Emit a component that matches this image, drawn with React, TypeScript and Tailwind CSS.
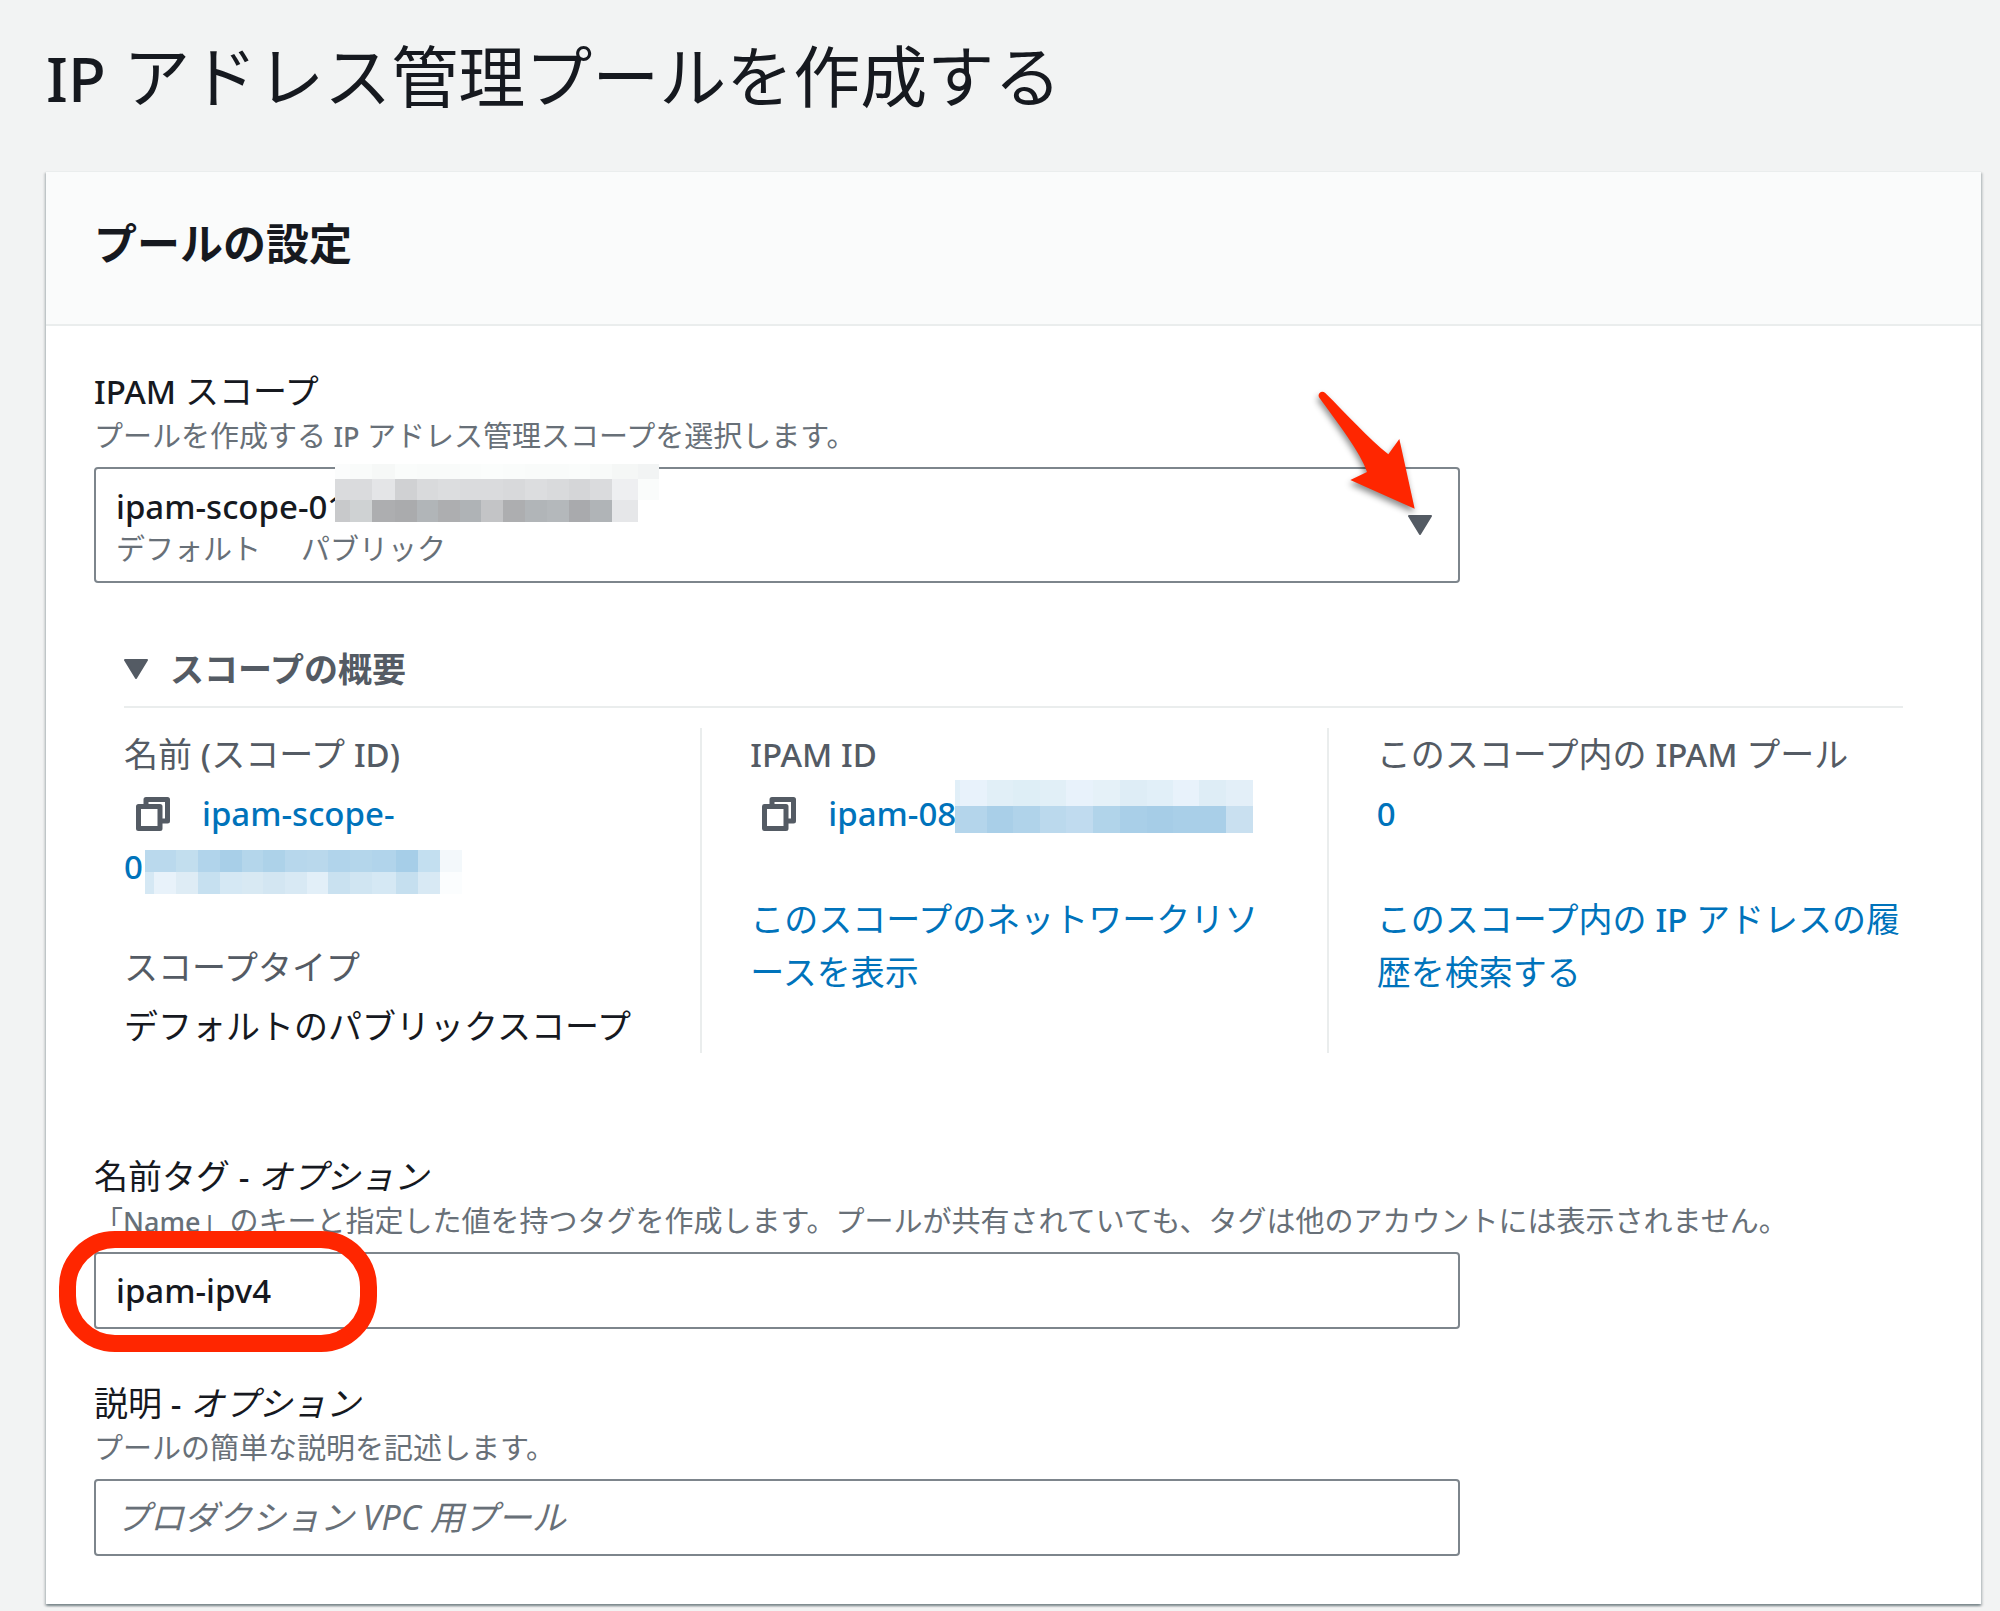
import React, { useState } from 'react';

interface MosaicProps {
  cols: number[];
  rows: number[];
  colors: string[][];
  className?: string;
}

interface FieldProps {
  id: string;
  label: React.ReactNode;
  optional?: boolean;
  hint: React.ReactNode;
  children: React.ReactNode;
}

// cols and rows are the edges of the cells, so they hold one value more than the colors
const scopeMask = {
  cols: [0, 15, 37, 60, 82, 103, 125, 146, 168, 190, 212, 234, 255, 277, 303, 324],
  rows: [0, 15, 36, 58],
  colors: [
    ['#fbfcfc', '#f9fbfa', '#f6f8f7', '#fafcfb', '#f9fbfa', '#f9fbfa', '#fafcfb', '#fbfdfc', '#fafcfb', '#f9fbfa', '#f9fbfa', '#fafcfb', '#f8faf9', '#f5f7f6', '#f2f4f4'],
    ['#dadbdd', '#dadbdd', '#e4e5e7', '#d0d1d3', '#d9dadc', '#dcdddf', '#dadbdd', '#dadbdd', '#d8d9db', '#dcdddf', '#d9dadc', '#d5d6d8', '#dadbdd', '#eeeff1', '#fafcfb'],
    ['#c8c9cb', '#cfd2d3', '#adaeb0', '#aaabad', '#b1b5b8', '#adaeb0', '#afb3b6', '#c3c4c6', '#adaeb0', '#b1b5b8', '#b4b8bb', '#a9aaad', '#b0b4b7', '#e6e7e9', '#ffffff'],
  ],
};

const scopeIdMask = {
  cols: [0, 9, 31, 53, 75, 97, 118, 140, 162, 183, 205, 227, 251, 273, 295, 317],
  rows: [0, 22, 44],
  colors: [
    ['#bad9ed', '#bad9ed', '#c2deee', '#b1d4eb', '#a8cfe8', '#b4d6eb', '#add2e9', '#b7d7ec', '#b9d8ec', '#b1d4eb', '#b4d6eb', '#b1d4eb', '#a6cee8', '#c3dff0', '#f3f8fb'],
    ['#d5e8f4', '#e8f2fa', '#deecf5', '#c6e0f0', '#d5e8f4', '#d8e9f3', '#d3e6f2', '#d8e9f4', '#e2eff8', '#c9e1f0', '#d0e5f2', '#d5e8f4', '#c5dfef', '#d8e9f4', '#fbfdfe'],
  ],
};

const ipamIdMask = {
  cols: [0, 5, 32, 58, 85, 111, 138, 165, 192, 218, 244, 271, 298],
  rows: [0, 26, 53],
  colors: [
    ['#e1eff8', '#e8f2fb', '#e1eff7', '#deeef6', '#e1eff7', '#e8f2fb', '#e5f1f8', '#deedf6', '#e1eff8', '#e8f2fb', '#deedf6', '#e3eff8'],
    ['#b4d5eb', '#b4d5eb', '#a9cfe8', '#b0d3ea', '#bbd9ed', '#c0dbef', '#b1d4ea', '#a9cfe8', '#a6cde7', '#a9cfe8', '#a9cfe8', '#c9e0f0'],
  ],
};

const Mosaic: React.FC<MosaicProps> = ({ cols, rows, colors, className = '' }) => {
  const width = cols[cols.length - 1];
  const height = rows[rows.length - 1];

  return (
    <svg
      width={width}
      height={height}
      viewBox={`0 0 ${width} ${height}`}
      shapeRendering="crispEdges"
      aria-hidden="true"
      className={`absolute max-w-none pointer-events-none ${className}`}
    >
      {colors.map((row, y) =>
        row.map((fill, x) => (
          <rect
            key={`${x}-${y}`}
            x={cols[x]}
            y={rows[y]}
            width={cols[x + 1] - cols[x]}
            height={rows[y + 1] - rows[y]}
            fill={fill}
          />
        ))
      )}
    </svg>
  );
};

// Latin words are set a little heavier than the Japanese text around them
const En: React.FC<{ small?: boolean; children: React.ReactNode }> = ({ small = false, children }) => (
  <span className={`font-['Noto_Sans',sans-serif] font-medium ${small ? 'text-[27px]/none' : 'text-[33px]/none'}`}>{children}</span>
);

const Caret: React.FC = () => (
  <svg width="24" height="20" viewBox="0 0 24 20" aria-hidden="true" className="shrink-0">
    <path d="M1 1h22L12 19z" fill="#545b64" stroke="#545b64" strokeWidth="2" strokeLinejoin="round" />
  </svg>
);

const CopyButton: React.FC<{ label: string }> = ({ label }) => (
  <button type="button" aria-label={label} className="ml-3 mr-8 mb-1.5 align-middle cursor-pointer">
    <svg width="34" height="34" viewBox="0 0 34 34" fill="none" stroke="#545b64" strokeWidth="5" strokeLinejoin="round" className="block">
      <path d="M2.5 9.500h21.500v22h-21.500z" />
      <path d="M10 9.500v-7h21.500v21.500h-7" />
    </svg>
  </button>
);

const Arrow: React.FC = () => (
  <svg
    width="105"
    height="125"
    viewBox="0 0 315 375"
    aria-hidden="true"
    className="absolute right-[38px] -top-[79px] overflow-visible pointer-events-none drop-shadow-[-1px_4px_3px_rgba(0,0,0,0.45)]"
  >
    <path d="M12 22C7 12 18 0 30 8C95 72 160 145 220 193L253 147L299 356L106 270L156 246C138 190 66 96 12 22Z" fill="#ff2600" />
  </svg>
);

const Field: React.FC<FieldProps> = ({ id, label, optional = false, hint, children }) => (
  <div>
    <label htmlFor={id} className="block text-[34px] leading-[52px]">
      {label}
      {optional && <> <En>-</En> <i>オプション</i></>}
    </label>
    <p id={`${id}-hint`} className="mb-3 text-[29px] leading-[38px] text-[#687078]">{hint}</p>
    {children}
  </div>
);

const inputClass =
  "block w-full h-[77px] px-5 rounded-[4px] border-2 border-[#7d858c] bg-white font-['Noto_Sans','Noto_Sans_CJK_JP',sans-serif] font-medium text-[33px] placeholder:font-normal placeholder:text-[34px] placeholder:italic placeholder:text-[#687078] placeholder:opacity-100";

const termClass = 'text-[#545b64]';
const linkClass = 'text-[#0073bb] hover:underline';

const ScopeSummary: React.FC = () => {
  const [open, setOpen] = useState(true);

  return (
    <section className="mx-[30px] mt-[60px] min-h-[409px]">
      <h3 className="border-b-2 border-[#eaeded] pb-[11px]">
        <button
          type="button"
          aria-expanded={open}
          onClick={() => setOpen(!open)}
          className="flex items-center gap-[22px] text-[34px] leading-[52px] font-bold text-[#545b64] cursor-pointer"
        >
          <Caret />
          スコープの概要
        </button>
      </h3>

      {open && (
        <div className="mt-5 grid grid-cols-3 gap-[100px] text-[34px] leading-[53px]">
          <dl>
            <dt className={termClass}>名前 <En>(</En>スコープ <En>ID)</En></dt>
            <dd className="mt-1.5 mb-12">
              <CopyButton label="スコープ ID をコピー" />
              <a href="#scope" className={linkClass}>
                <En>ipam-scope-</En><br />
                <span className="relative">
                  <En>0</En>
                  <Mosaic {...scopeIdMask} className="left-[21px] top-[7px]" />
                </span>
              </a>
            </dd>
            <dt className={termClass}>スコープタイプ</dt>
            <dd className="mt-1.5 whitespace-nowrap">デフォルトのパブリックスコープ</dd>
          </dl>

          <div className="-ml-[50px] border-l-2 border-[#eaeded] pl-12">
            <dl className="mb-[53px]">
              <dt className={termClass}><En>IPAM ID</En></dt>
              <dd className="mt-1.5">
                <CopyButton label="IPAM ID をコピー" />
                <a href="#ipam" className={`relative ${linkClass}`}>
                  <En>ipam-08</En>
                  <Mosaic {...ipamIdMask} className="left-[127px] -top-2.5" />
                </a>
              </dd>
            </dl>
            <a href="#resources" className={linkClass}>このスコープのネットワークリソースを表示</a>
          </div>

          <div className="-ml-[50px] border-l-2 border-[#eaeded] pl-12">
            <dl className="mb-[53px]">
              <dt className={termClass}>このスコープ内の <En>IPAM</En> プール</dt>
              <dd className="mt-1.5">
                <a href="#pools" className={linkClass}><En>0</En></a>
              </dd>
            </dl>
            <a href="#history" className={linkClass}>このスコープ内の <En>IP</En> アドレスの履歴を検索する</a>
          </div>
        </div>
      )}
    </section>
  );
};

const App: React.FC = () => {
  const [name, setName] = useState('ipam-ipv4');
  const [description, setDescription] = useState('');

  return (
    <main
      lang="ja"
      className="min-h-screen bg-[#f2f3f3] pl-[46px] pr-[19px] pb-[7px] font-['Open_Sans','Noto_Sans_CJK_JP',sans-serif] [line-break:loose] text-[#16191f]"
    >
      <h1 className="pt-7 pb-[47px] text-[67px] leading-[96px]">
        <span className="font-['Noto_Sans',sans-serif] font-medium text-[62px]/none">IP</span> アドレス管理プールを作成する
      </h1>

      <section className="bg-white border-t border-[#eaeded] shadow-[0_2px_2px_0_rgba(0,28,36,0.35),2px_2px_2px_0_rgba(0,28,36,0.12),-2px_2px_2px_0_rgba(0,28,36,0.12)]">
        <header className="border-b-2 border-[#eaeded] bg-[#fafbfb] px-12 pt-[42px] pb-[50px]">
          <h2 className="text-[43px] leading-[60px] font-bold">プールの設定</h2>
        </header>

        <form className="px-12 pt-[39px] pb-12" onSubmit={(e) => e.preventDefault()}>
          <Field
            id="scope"
            label={<><En>IPAM</En> スコープ</>}
            hint={<>プールを作成する <En small>IP</En> アドレス管理スコープを選択します。</>}
          >
            <div className="relative flex w-full max-w-[1366px] items-center justify-between rounded-[4px] border-2 border-[#7d858c] bg-white py-[13px] pl-5 pr-[26px]">
              <div>
                <div className="text-[34px] leading-[48px]"><En>ipam-scope-01</En></div>
                <div className="flex gap-10 text-[29px] leading-[38px] text-[#687078]">
                  <span>デフォルト</span>
                  <span>パブリック</span>
                </div>
              </div>
              <Caret />
              <Mosaic {...scopeMask} className="left-[239px] -top-[5px]" />
              <select id="scope" aria-describedby="scope-hint" className="absolute inset-0 w-full opacity-0 cursor-pointer">
                <option>ipam-scope-01</option>
              </select>
              <Arrow />
            </div>
          </Field>

          <ScopeSummary />

          <div className="mt-[97px] flex flex-col gap-12">
            <Field
              id="name"
              label="名前タグ"
              optional
              hint={<>「<En small>Name</En>」のキーと指定した値を持つタグを作成します。プールが共有されていても、タグは他のアカウントには表示されません。</>}
            >
              <div className="relative max-w-[1366px]">
                <input
                  id="name"
                  type="text"
                  aria-describedby="name-hint"
                  value={name}
                  onChange={(e) => setName(e.target.value)}
                  className={inputClass}
                />
                <span className="absolute -left-[35px] -top-[21px] h-[121px] w-[318px] rounded-[56px] border-[17px] border-[#ff2600] pointer-events-none" />
              </div>
            </Field>

            <Field id="description" label="説明" optional hint="プールの簡単な説明を記述します。">
              <div className="max-w-[1366px]">
                <input
                  id="description"
                  type="text"
                  aria-describedby="description-hint"
                  placeholder="プロダクション VPC 用プール"
                  value={description}
                  onChange={(e) => setDescription(e.target.value)}
                  className={inputClass}
                />
              </div>
            </Field>
          </div>
        </form>
      </section>
    </main>
  );
};

export default App;
